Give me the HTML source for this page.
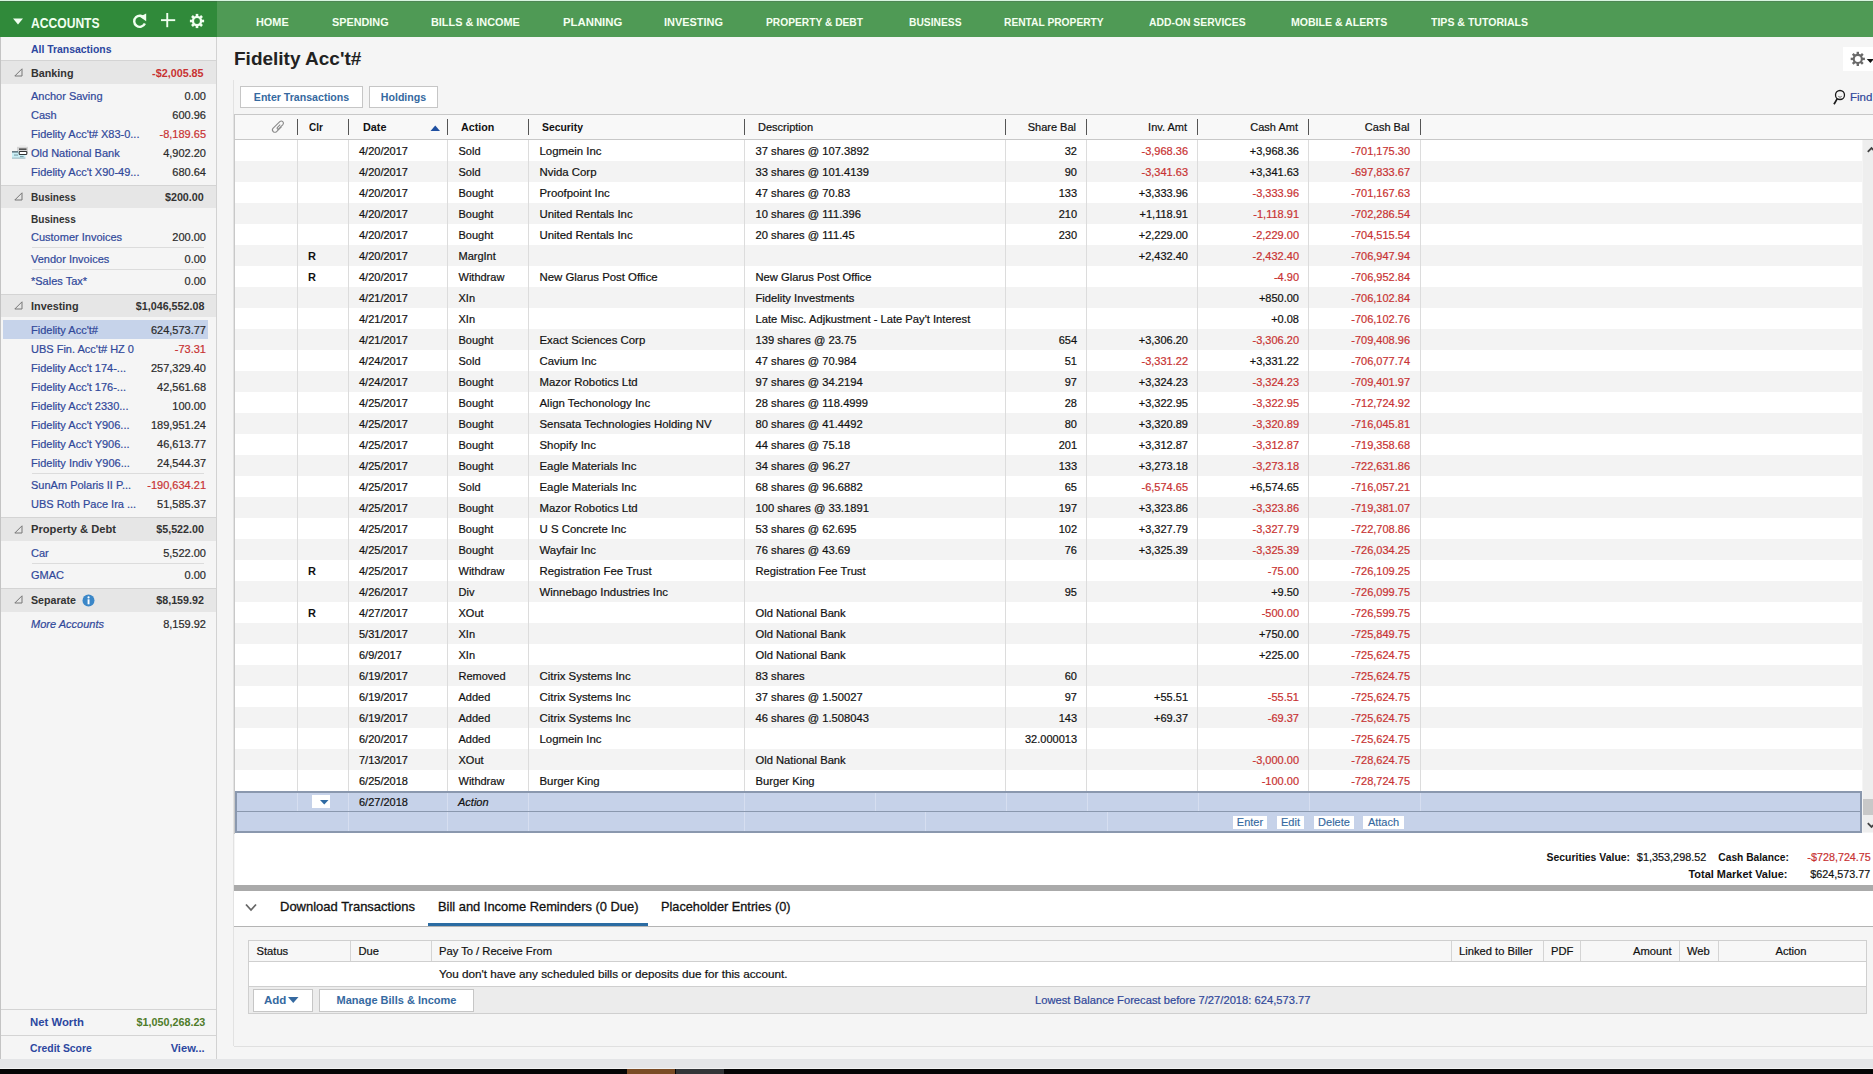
<!DOCTYPE html>
<html><head><meta charset="utf-8"><style>
html,body{margin:0;padding:0;}
body{width:1873px;height:1074px;position:relative;overflow:hidden;font-family:"Liberation Sans", sans-serif;background:#f5f5f5;}
.t{position:absolute;white-space:nowrap;}
.b{position:absolute;}
svg.b{overflow:visible;}
</style></head><body>
<div class="b" style="left:0px;top:0px;width:1873px;height:1074px;background:#f5f5f5;"></div>
<div class="b" style="left:0px;top:0px;width:1873px;height:1px;background:#d8f6e0;"></div>
<div class="b" style="left:0px;top:1px;width:217px;height:1px;background:#3b7542;"></div>
<div class="b" style="left:217px;top:1px;width:1656px;height:1px;background:#4f8755;"></div>
<div class="b" style="left:0px;top:2px;width:217px;height:35px;background:#308a3a;"></div>
<div class="b" style="left:217px;top:2px;width:1656px;height:35px;background:#4f9a55;"></div>
<div class="t" style="left: 256px; top: 12px; height: 20px; line-height: 20px; font-size: 11px; font-weight: 700; color: rgb(244, 255, 240); transform: scaleX(0.9909); transform-origin: 0px 0px;">HOME</div>
<div class="t" style="left: 331.8px; top: 12px; height: 20px; line-height: 20px; font-size: 11px; font-weight: 700; color: rgb(244, 255, 240); transform: scaleX(0.9849); transform-origin: 0px 0px;">SPENDING</div>
<div class="t" style="left: 431px; top: 12px; height: 20px; line-height: 20px; font-size: 11px; font-weight: 700; color: rgb(244, 255, 240); transform: scaleX(0.9884); transform-origin: 0px 0px;">BILLS &amp; INCOME</div>
<div class="t" style="left: 563px; top: 12px; height: 20px; line-height: 20px; font-size: 11px; font-weight: 700; color: rgb(244, 255, 240); transform: scaleX(1.0321); transform-origin: 0px 0px;">PLANNING</div>
<div class="t" style="left: 664px; top: 12px; height: 20px; line-height: 20px; font-size: 11px; font-weight: 700; color: rgb(244, 255, 240); transform: scaleX(0.995); transform-origin: 0px 0px;">INVESTING</div>
<div class="t" style="left: 766px; top: 12px; height: 20px; line-height: 20px; font-size: 11px; font-weight: 700; color: rgb(244, 255, 240); transform: scaleX(0.9299); transform-origin: 0px 0px;">PROPERTY &amp; DEBT</div>
<div class="t" style="left: 908.8px; top: 12px; height: 20px; line-height: 20px; font-size: 11px; font-weight: 700; color: rgb(244, 255, 240); transform: scaleX(0.9333); transform-origin: 0px 0px;">BUSINESS</div>
<div class="t" style="left: 1003.9px; top: 12px; height: 20px; line-height: 20px; font-size: 11px; font-weight: 700; color: rgb(244, 255, 240); transform: scaleX(0.9303); transform-origin: 0px 0px;">RENTAL PROPERTY</div>
<div class="t" style="left: 1149.4px; top: 12px; height: 20px; line-height: 20px; font-size: 11px; font-weight: 700; color: rgb(244, 255, 240); transform: scaleX(0.9426); transform-origin: 0px 0px;">ADD-ON SERVICES</div>
<div class="t" style="left: 1291px; top: 12px; height: 20px; line-height: 20px; font-size: 11px; font-weight: 700; color: rgb(244, 255, 240); transform: scaleX(0.9588); transform-origin: 0px 0px;">MOBILE &amp; ALERTS</div>
<div class="t" style="left: 1431px; top: 12px; height: 20px; line-height: 20px; font-size: 11px; font-weight: 700; color: rgb(244, 255, 240); transform: scaleX(0.958); transform-origin: 0px 0px;">TIPS &amp; TUTORIALS</div>
<svg class="b" style="left:12px;top:18px" width="12" height="7"><path d="M1 0.5 L11 0.5 L6 6.5 Z" fill="#f0fff0"></path></svg>
<div class="t" style="left: 31px; top: 12.5px; height: 20px; line-height: 20px; font-size: 14.2px; font-weight: 700; color: rgb(240, 255, 240); transform: scaleX(0.8532); transform-origin: 0px 0px;">ACCOUNTS</div>
<svg class="b" style="left:129.5px;top:12px" width="18" height="18" viewBox="0 0 18 18"><path d="M14.6 6.4 A5.6 5.6 0 1 0 14.9 11.6" fill="none" stroke="#f0fff0" stroke-width="2.4"></path><path d="M9.8 4.8 L16.2 1.6 L16.2 9.2 Z" fill="#f0fff0"></path></svg>
<svg class="b" style="left:160px;top:12px" width="16" height="16"><rect x="6.3" y="1" width="1.9" height="14.2" fill="#f0fff0"></rect><rect x="1" y="7.2" width="14.2" height="1.9" fill="#f0fff0"></rect></svg>
<svg class="b" style="left:188px;top:12px" width="18" height="18"><circle cx="9" cy="9" r="5.2" fill="#f0fff0"></circle><rect x="7.70" y="1.90" width="2.60" height="3.10" fill="#f0fff0" transform="rotate(0.0 9 9)"></rect><rect x="7.70" y="1.90" width="2.60" height="3.10" fill="#f0fff0" transform="rotate(45.0 9 9)"></rect><rect x="7.70" y="1.90" width="2.60" height="3.10" fill="#f0fff0" transform="rotate(90.0 9 9)"></rect><rect x="7.70" y="1.90" width="2.60" height="3.10" fill="#f0fff0" transform="rotate(135.0 9 9)"></rect><rect x="7.70" y="1.90" width="2.60" height="3.10" fill="#f0fff0" transform="rotate(180.0 9 9)"></rect><rect x="7.70" y="1.90" width="2.60" height="3.10" fill="#f0fff0" transform="rotate(225.0 9 9)"></rect><rect x="7.70" y="1.90" width="2.60" height="3.10" fill="#f0fff0" transform="rotate(270.0 9 9)"></rect><rect x="7.70" y="1.90" width="2.60" height="3.10" fill="#f0fff0" transform="rotate(315.0 9 9)"></rect><circle cx="9" cy="9" r="2.9" fill="#308a3a"></circle></svg>
<div class="b" style="left:0px;top:37px;width:1px;height:1022px;background:#c4c4c4;"></div>
<div class="b" style="left:216px;top:37px;width:1px;height:1022px;background:#d2d2d2;"></div>
<div class="t" style="left: 31px; top: 38.5px; height: 20px; line-height: 20px; font-size: 11px; color: rgb(44, 71, 160); font-weight: 700; transform: scaleX(0.9472); transform-origin: 0px 0px;">All Transactions</div>
<div class="b" style="left:1px;top:60px;width:215px;height:1px;background:#d4d4d4;"></div>
<div class="b" style="left:1px;top:61px;width:215px;height:23px;background:#e6e6e6;"></div>
<svg class="b" style="left:14px;top:68.2px" width="9" height="9"><path d="M8 0.8 L8 8 L0.8 8 Z" fill="none" stroke="#777" stroke-width="1"></path></svg>
<div class="t" style="left: 31px; top: 62.7px; height: 20px; line-height: 20px; font-size: 11px; color: rgb(51, 51, 51); font-weight: 700; transform: scaleX(0.9791); transform-origin: 0px 0px;">Banking</div>
<div class="t" style="right: 1669px; text-align: right; top: 62.7px; height: 20px; line-height: 20px; font-size: 11px; color: rgb(200, 50, 50); font-weight: 700; transform: scaleX(0.9789); transform-origin: 100% 0px;">-$2,005.85</div>
<div class="t" style="left:31px;top:86.0px;height:20px;line-height:20px;font-size:11px;color:#30489a;-webkit-text-stroke:0.2px #30489a;">Anchor Saving</div>
<div class="t" style="right:1667px;text-align:right;top:86.0px;height:20px;line-height:20px;font-size:11px;color:#2a2a2a;-webkit-text-stroke:0.2px #2a2a2a;">0.00</div>
<div class="t" style="left:31px;top:105.0px;height:20px;line-height:20px;font-size:11px;color:#30489a;-webkit-text-stroke:0.2px #30489a;">Cash</div>
<div class="t" style="right:1667px;text-align:right;top:105.0px;height:20px;line-height:20px;font-size:11px;color:#2a2a2a;-webkit-text-stroke:0.2px #2a2a2a;">600.96</div>
<div class="t" style="left:31px;top:124.0px;height:20px;line-height:20px;font-size:11px;color:#30489a;-webkit-text-stroke:0.2px #30489a;">Fidelity Acc't# X83-0...</div>
<div class="t" style="right:1667px;text-align:right;top:124.0px;height:20px;line-height:20px;font-size:11px;color:#c83232;-webkit-text-stroke:0.2px #c83232;">-8,189.65</div>
<div class="t" style="left:31px;top:143.0px;height:20px;line-height:20px;font-size:11px;color:#30489a;-webkit-text-stroke:0.2px #30489a;">Old National Bank</div>
<div class="t" style="right:1667px;text-align:right;top:143.0px;height:20px;line-height:20px;font-size:11px;color:#2a2a2a;-webkit-text-stroke:0.2px #2a2a2a;">4,902.20</div>
<div class="t" style="left:31px;top:162.0px;height:20px;line-height:20px;font-size:11px;color:#30489a;-webkit-text-stroke:0.2px #30489a;">Fidelity Acc't X90-49...</div>
<div class="t" style="right:1667px;text-align:right;top:162.0px;height:20px;line-height:20px;font-size:11px;color:#2a2a2a;-webkit-text-stroke:0.2px #2a2a2a;">680.64</div>
<svg class="b" style="left:11px;top:145px" width="18" height="16"><rect x="6" y="1.8" width="11" height="6.5" fill="#d4d4d4"></rect><rect x="8.5" y="0.2" width="6.5" height="1.8" fill="#ececec"></rect><rect x="8" y="3.5" width="7.5" height="1.3" fill="#333"></rect><rect x="1" y="6.2" width="13.4" height="7.4" fill="#c9eef5"></rect><rect x="1" y="12.6" width="13.4" height="1" fill="#9fb4bb"></rect><rect x="1" y="6.2" width="6" height="1.3" fill="#4d5f6a"></rect><rect x="8.2" y="6.5" width="7.6" height="3" rx="0.8" fill="#fff" stroke="#333" stroke-width="1.1"></rect><rect x="3" y="9.6" width="4" height="0.9" fill="#6a8a95"></rect><rect x="9" y="11.2" width="3.6" height="0.9" fill="#6a8a95"></rect></svg>
<div class="b" style="left:1px;top:185px;width:215px;height:1px;background:#d4d4d4;"></div>
<div class="b" style="left:1px;top:186px;width:215px;height:22px;background:#e6e6e6;"></div>
<svg class="b" style="left:14px;top:192.1px" width="9" height="9"><path d="M8 0.8 L8 8 L0.8 8 Z" fill="none" stroke="#777" stroke-width="1"></path></svg>
<div class="t" style="left: 31px; top: 186.6px; height: 20px; line-height: 20px; font-size: 11px; color: rgb(51, 51, 51); font-weight: 700; transform: scaleX(0.9157); transform-origin: 0px 0px;">Business</div>
<div class="t" style="right: 1669px; text-align: right; top: 186.6px; height: 20px; line-height: 20px; font-size: 11px; color: rgb(51, 51, 51); font-weight: 700; transform: scaleX(0.9757); transform-origin: 100% 0px;">$200.00</div>
<div class="t" style="left: 31px; top: 209px; height: 20px; line-height: 20px; font-size: 11px; color: rgb(51, 51, 51); font-weight: 700; transform: scaleX(0.9157); transform-origin: 0px 0px;">Business</div>
<div class="t" style="left:31px;top:227.0px;height:20px;line-height:20px;font-size:11px;color:#30489a;-webkit-text-stroke:0.2px #30489a;">Customer Invoices</div>
<div class="t" style="right:1667px;text-align:right;top:227.0px;height:20px;line-height:20px;font-size:11px;color:#2a2a2a;-webkit-text-stroke:0.2px #2a2a2a;">200.00</div>
<div class="b" style="left:32px;top:247px;width:172px;height:1px;background:#dcdcdc;"></div>
<div class="t" style="left:31px;top:249.0px;height:20px;line-height:20px;font-size:11px;color:#30489a;-webkit-text-stroke:0.2px #30489a;">Vendor Invoices</div>
<div class="t" style="right:1667px;text-align:right;top:249.0px;height:20px;line-height:20px;font-size:11px;color:#2a2a2a;-webkit-text-stroke:0.2px #2a2a2a;">0.00</div>
<div class="b" style="left:32px;top:269px;width:172px;height:1px;background:#dcdcdc;"></div>
<div class="t" style="left:31px;top:271.0px;height:20px;line-height:20px;font-size:11px;color:#30489a;-webkit-text-stroke:0.2px #30489a;">*Sales Tax*</div>
<div class="t" style="right:1667px;text-align:right;top:271.0px;height:20px;line-height:20px;font-size:11px;color:#2a2a2a;-webkit-text-stroke:0.2px #2a2a2a;">0.00</div>
<div class="b" style="left:1px;top:294px;width:215px;height:1px;background:#d4d4d4;"></div>
<div class="b" style="left:1px;top:295px;width:215px;height:22px;background:#e6e6e6;"></div>
<svg class="b" style="left:14px;top:301.3px" width="9" height="9"><path d="M8 0.8 L8 8 L0.8 8 Z" fill="none" stroke="#777" stroke-width="1"></path></svg>
<div class="t" style="left: 31px; top: 295.8px; height: 20px; line-height: 20px; font-size: 11px; color: rgb(51, 51, 51); font-weight: 700; transform: scaleX(0.9856); transform-origin: 0px 0px;">Investing</div>
<div class="t" style="right: 1669px; text-align: right; top: 295.8px; height: 20px; line-height: 20px; font-size: 11px; color: rgb(51, 51, 51); font-weight: 700; transform: scaleX(0.9736); transform-origin: 100% 0px;">$1,046,552.08</div>
<div class="b" style="left:3px;top:320px;width:205px;height:19px;background:#c6d3ea;"></div>
<div class="t" style="left:31px;top:319.5px;height:20px;line-height:20px;font-size:11px;color:#30489a;-webkit-text-stroke:0.2px #30489a;">Fidelity Acc't#</div>
<div class="t" style="right:1667px;text-align:right;top:319.5px;height:20px;line-height:20px;font-size:11px;color:#2a2a2a;-webkit-text-stroke:0.2px #2a2a2a;">624,573.77</div>
<div class="t" style="left:31px;top:338.5px;height:20px;line-height:20px;font-size:11px;color:#30489a;-webkit-text-stroke:0.2px #30489a;">UBS Fin. Acc't# HZ 0</div>
<div class="t" style="right:1667px;text-align:right;top:338.5px;height:20px;line-height:20px;font-size:11px;color:#c83232;-webkit-text-stroke:0.2px #c83232;">-73.31</div>
<div class="t" style="left:31px;top:357.5px;height:20px;line-height:20px;font-size:11px;color:#30489a;-webkit-text-stroke:0.2px #30489a;">Fidelity Acc't 174-...</div>
<div class="t" style="right:1667px;text-align:right;top:357.5px;height:20px;line-height:20px;font-size:11px;color:#2a2a2a;-webkit-text-stroke:0.2px #2a2a2a;">257,329.40</div>
<div class="t" style="left:31px;top:376.5px;height:20px;line-height:20px;font-size:11px;color:#30489a;-webkit-text-stroke:0.2px #30489a;">Fidelity Acc't 176-...</div>
<div class="t" style="right:1667px;text-align:right;top:376.5px;height:20px;line-height:20px;font-size:11px;color:#2a2a2a;-webkit-text-stroke:0.2px #2a2a2a;">42,561.68</div>
<div class="t" style="left:31px;top:395.5px;height:20px;line-height:20px;font-size:11px;color:#30489a;-webkit-text-stroke:0.2px #30489a;">Fidelity Acc't 2330...</div>
<div class="t" style="right:1667px;text-align:right;top:395.5px;height:20px;line-height:20px;font-size:11px;color:#2a2a2a;-webkit-text-stroke:0.2px #2a2a2a;">100.00</div>
<div class="t" style="left:31px;top:414.5px;height:20px;line-height:20px;font-size:11px;color:#30489a;-webkit-text-stroke:0.2px #30489a;">Fidelity Acc't Y906...</div>
<div class="t" style="right:1667px;text-align:right;top:414.5px;height:20px;line-height:20px;font-size:11px;color:#2a2a2a;-webkit-text-stroke:0.2px #2a2a2a;">189,951.24</div>
<div class="t" style="left:31px;top:433.5px;height:20px;line-height:20px;font-size:11px;color:#30489a;-webkit-text-stroke:0.2px #30489a;">Fidelity Acc't Y906...</div>
<div class="t" style="right:1667px;text-align:right;top:433.5px;height:20px;line-height:20px;font-size:11px;color:#2a2a2a;-webkit-text-stroke:0.2px #2a2a2a;">46,613.77</div>
<div class="t" style="left:31px;top:452.5px;height:20px;line-height:20px;font-size:11px;color:#30489a;-webkit-text-stroke:0.2px #30489a;">Fidelity Indiv Y906...</div>
<div class="t" style="right:1667px;text-align:right;top:452.5px;height:20px;line-height:20px;font-size:11px;color:#2a2a2a;-webkit-text-stroke:0.2px #2a2a2a;">24,544.37</div>
<div class="b" style="left:32px;top:473px;width:172px;height:1px;background:#dcdcdc;"></div>
<div class="t" style="left:31px;top:475.0px;height:20px;line-height:20px;font-size:11px;color:#30489a;-webkit-text-stroke:0.2px #30489a;">SunAm Polaris II P...</div>
<div class="t" style="right:1667px;text-align:right;top:475.0px;height:20px;line-height:20px;font-size:11px;color:#c83232;-webkit-text-stroke:0.2px #c83232;">-190,634.21</div>
<div class="t" style="left:31px;top:494.0px;height:20px;line-height:20px;font-size:11px;color:#30489a;-webkit-text-stroke:0.2px #30489a;">UBS Roth Pace Ira ...</div>
<div class="t" style="right:1667px;text-align:right;top:494.0px;height:20px;line-height:20px;font-size:11px;color:#2a2a2a;-webkit-text-stroke:0.2px #2a2a2a;">51,585.37</div>
<div class="b" style="left:1px;top:517px;width:215px;height:1px;background:#d4d4d4;"></div>
<div class="b" style="left:1px;top:518px;width:215px;height:23px;background:#e6e6e6;"></div>
<svg class="b" style="left:14px;top:524.6px" width="9" height="9"><path d="M8 0.8 L8 8 L0.8 8 Z" fill="none" stroke="#777" stroke-width="1"></path></svg>
<div class="t" style="left: 31px; top: 519.1px; height: 20px; line-height: 20px; font-size: 11px; color: rgb(51, 51, 51); font-weight: 700; transform: scaleX(1.0149); transform-origin: 0px 0px;">Property &amp; Debt</div>
<div class="t" style="right: 1669px; text-align: right; top: 519.1px; height: 20px; line-height: 20px; font-size: 11px; color: rgb(51, 51, 51); font-weight: 700; transform: scaleX(0.9747); transform-origin: 100% 0px;">$5,522.00</div>
<div class="t" style="left:31px;top:543.0px;height:20px;line-height:20px;font-size:11px;color:#30489a;-webkit-text-stroke:0.2px #30489a;">Car</div>
<div class="t" style="right:1667px;text-align:right;top:543.0px;height:20px;line-height:20px;font-size:11px;color:#2a2a2a;-webkit-text-stroke:0.2px #2a2a2a;">5,522.00</div>
<div class="b" style="left:32px;top:563px;width:172px;height:1px;background:#dcdcdc;"></div>
<div class="t" style="left:31px;top:565.0px;height:20px;line-height:20px;font-size:11px;color:#30489a;-webkit-text-stroke:0.2px #30489a;">GMAC</div>
<div class="t" style="right:1667px;text-align:right;top:565.0px;height:20px;line-height:20px;font-size:11px;color:#2a2a2a;-webkit-text-stroke:0.2px #2a2a2a;">0.00</div>
<div class="b" style="left:1px;top:588px;width:215px;height:1px;background:#d4d4d4;"></div>
<div class="b" style="left:1px;top:589px;width:215px;height:23px;background:#e6e6e6;"></div>
<svg class="b" style="left:14px;top:595.1px" width="9" height="9"><path d="M8 0.8 L8 8 L0.8 8 Z" fill="none" stroke="#777" stroke-width="1"></path></svg>
<div class="t" style="left: 31px; top: 589.6px; height: 20px; line-height: 20px; font-size: 11px; color: rgb(51, 51, 51); font-weight: 700; transform: scaleX(0.9681); transform-origin: 0px 0px;">Separate</div>
<div class="t" style="right: 1669px; text-align: right; top: 589.6px; height: 20px; line-height: 20px; font-size: 11px; color: rgb(51, 51, 51); font-weight: 700; transform: scaleX(0.9747); transform-origin: 100% 0px;">$8,159.92</div>
<svg class="b" style="left:82px;top:593.6px" width="13" height="13"><circle cx="6.5" cy="6.5" r="6" fill="#3b87c8"></circle><rect x="5.6" y="5.3" width="1.9" height="5" fill="#fff"></rect><circle cx="6.55" cy="3.4" r="1.1" fill="#fff"></circle></svg>
<div class="t" style="left:31px;top:614.0px;height:20px;line-height:20px;font-size:11px;color:#30489a;font-style:italic;-webkit-text-stroke:0.2px #30489a;">More Accounts</div>
<div class="t" style="right:1667px;text-align:right;top:614.0px;height:20px;line-height:20px;font-size:11px;color:#2a2a2a;-webkit-text-stroke:0.2px #2a2a2a;">8,159.92</div>
<div class="b" style="left:1px;top:1009px;width:215px;height:1px;background:#d4d4d4;"></div>
<div class="t" style="left: 30px; top: 1012px; height: 20px; line-height: 20px; font-size: 11px; color: rgb(44, 71, 160); font-weight: 700; transform: scaleX(1.0313); transform-origin: 0px 0px;">Net Worth</div>
<div class="t" style="right: 1668px; text-align: right; top: 1012px; height: 20px; line-height: 20px; font-size: 11px; color: rgb(79, 124, 42); font-weight: 700; transform: scaleX(0.9778); transform-origin: 100% 0px;">$1,050,268.23</div>
<div class="b" style="left:1px;top:1035px;width:215px;height:1px;background:#d4d4d4;"></div>
<div class="t" style="left: 30px; top: 1038px; height: 20px; line-height: 20px; font-size: 11px; color: rgb(44, 71, 160); font-weight: 700; transform: scaleX(0.9446); transform-origin: 0px 0px;">Credit Score</div>
<div class="t" style="right: 1668px; text-align: right; top: 1038px; height: 20px; line-height: 20px; font-size: 11px; color: rgb(44, 71, 160); font-weight: 700; transform: scaleX(1.0107); transform-origin: 100% 0px;">View...</div>
<div class="t" style="left:234px;top:47px;height:24px;line-height:24px;font-size:19px;font-weight:700;color:#222;">Fidelity Acc't#</div>
<div class="b" style="left:233px;top:80px;width:1px;height:966px;background:#e2e2e2;"></div>
<div class="b" style="left:1843px;top:47px;width:30px;height:24px;background:#ffffff;"></div>
<svg class="b" style="left:1849px;top:50px" width="26" height="18"><circle cx="8.8" cy="8.9" r="5.1" fill="#6a6a6a"></circle><rect x="7.60" y="1.80" width="2.40" height="3.20" fill="#6a6a6a" transform="rotate(0.0 8.8 8.9)"></rect><rect x="7.60" y="1.80" width="2.40" height="3.20" fill="#6a6a6a" transform="rotate(45.0 8.8 8.9)"></rect><rect x="7.60" y="1.80" width="2.40" height="3.20" fill="#6a6a6a" transform="rotate(90.0 8.8 8.9)"></rect><rect x="7.60" y="1.80" width="2.40" height="3.20" fill="#6a6a6a" transform="rotate(135.0 8.8 8.9)"></rect><rect x="7.60" y="1.80" width="2.40" height="3.20" fill="#6a6a6a" transform="rotate(180.0 8.8 8.9)"></rect><rect x="7.60" y="1.80" width="2.40" height="3.20" fill="#6a6a6a" transform="rotate(225.0 8.8 8.9)"></rect><rect x="7.60" y="1.80" width="2.40" height="3.20" fill="#6a6a6a" transform="rotate(270.0 8.8 8.9)"></rect><rect x="7.60" y="1.80" width="2.40" height="3.20" fill="#6a6a6a" transform="rotate(315.0 8.8 8.9)"></rect><circle cx="8.8" cy="8.9" r="3.0" fill="#fff"></circle><path d="M17.8 9 L25 9 L21.4 13 Z" fill="#111"></path></svg>
<svg class="b" style="left:1832px;top:88px" width="14" height="18"><circle cx="8" cy="7" r="4.5" fill="none" stroke="#1a1a1a" stroke-width="1.3"></circle><path d="M6.3 8.3 A2.2 2.2 0 0 0 9.7 8.3" fill="none" stroke="#444" stroke-width="0.8"></path><path d="M5.3 10.6 L2 16.2" stroke="#1a1a1a" stroke-width="1.7"></path></svg>
<div class="t" style="left:1850px;top:87.0px;height:20px;line-height:20px;font-size:11.5px;color:#30489a;-webkit-text-stroke:0.2px #30489a;">Find</div>
<div class="b" style="left:240px;top:86px;width:123px;height:22px;background:#fff;box-sizing:border-box;border:1px solid #c6c6c6;"></div>
<div class="t" style="left:240px;top:87.0px;width:123px;height:20px;line-height:20px;font-size:10.6px;font-weight:700;color:#3569a0;text-align:center;">Enter Transactions</div>
<div class="b" style="left:369px;top:86px;width:69px;height:22px;background:#fff;box-sizing:border-box;border:1px solid #c6c6c6;"></div>
<div class="t" style="left:369px;top:87.0px;width:69px;height:20px;line-height:20px;font-size:10.6px;font-weight:700;color:#3569a0;text-align:center;">Holdings</div>
<div class="b" style="left:234px;top:114px;width:1639px;height:1px;background:#c8c8c8;"></div>
<div class="b" style="left:234px;top:114px;width:1px;height:720px;background:#c8c8c8;"></div>
<div class="b" style="left:235px;top:115px;width:1638px;height:24px;background:#f8f8f8;"></div>
<div class="b" style="left:235px;top:139px;width:1638px;height:1px;background:#c8c8c8;"></div>
<div class="b" style="left:235px;top:140px;width:1627px;height:745px;background:#ffffff;"></div>
<div class="b" style="left:297px;top:119px;width:1px;height:16px;background:#555;"></div>
<div class="b" style="left:348px;top:119px;width:1px;height:16px;background:#555;"></div>
<div class="b" style="left:447px;top:119px;width:1px;height:16px;background:#555;"></div>
<div class="b" style="left:528px;top:119px;width:1px;height:16px;background:#555;"></div>
<div class="b" style="left:744px;top:119px;width:1px;height:16px;background:#555;"></div>
<div class="b" style="left:1005px;top:119px;width:1px;height:16px;background:#555;"></div>
<div class="b" style="left:1086px;top:119px;width:1px;height:16px;background:#555;"></div>
<div class="b" style="left:1197px;top:119px;width:1px;height:16px;background:#555;"></div>
<div class="b" style="left:1308px;top:119px;width:1px;height:16px;background:#555;"></div>
<div class="b" style="left:1420px;top:119px;width:1px;height:16px;background:#555;"></div>
<svg class="b" style="left:270px;top:119px" width="16" height="16"><path d="M11.6 7.6 L6.6 12.6 A2.4 2.4 0 0 1 3.2 9.2 L9.8 2.6 A2.2 2.2 0 0 1 12.9 5.7 L8.7 9.9 A1 1 0 0 1 7.3 8.5 L10.2 5.6" fill="none" stroke="#8a8a8a" stroke-width="1.1"></path></svg>
<div class="t" style="left: 308.5px; top: 117px; height: 20px; line-height: 20px; font-size: 11px; color: rgb(17, 17, 17); font-weight: 700; transform: scaleX(0.9031); transform-origin: 0px 0px;">Clr</div>
<div class="t" style="left: 362.5px; top: 117px; height: 20px; line-height: 20px; font-size: 11px; color: rgb(17, 17, 17); font-weight: 700; transform: scaleX(0.9856); transform-origin: 0px 0px;">Date</div>
<svg class="b" style="left:430px;top:125px" width="11" height="7"><path d="M0.5 6 L5.25 0.5 L10 6 Z" fill="#1f4fa0"></path></svg>
<div class="t" style="left: 461px; top: 117px; height: 20px; line-height: 20px; font-size: 11px; color: rgb(17, 17, 17); font-weight: 700; transform: scaleX(0.9698); transform-origin: 0px 0px;">Action</div>
<div class="t" style="left: 542px; top: 117px; height: 20px; line-height: 20px; font-size: 11px; color: rgb(17, 17, 17); font-weight: 700; transform: scaleX(0.9442); transform-origin: 0px 0px;">Security</div>
<div class="t" style="left:758px;top:117.0px;height:20px;line-height:20px;font-size:11px;color:#111;-webkit-text-stroke:0.2px #111;">Description</div>
<div class="t" style="right:797px;text-align:right;top:117.0px;height:20px;line-height:20px;font-size:11px;color:#111;-webkit-text-stroke:0.2px #111;">Share Bal</div>
<div class="t" style="right:686px;text-align:right;top:117.0px;height:20px;line-height:20px;font-size:11px;color:#111;-webkit-text-stroke:0.2px #111;">Inv. Amt</div>
<div class="t" style="right:575px;text-align:right;top:117.0px;height:20px;line-height:20px;font-size:11px;color:#111;-webkit-text-stroke:0.2px #111;">Cash Amt</div>
<div class="t" style="right:463.5px;text-align:right;top:117.0px;height:20px;line-height:20px;font-size:11px;color:#111;-webkit-text-stroke:0.2px #111;">Cash Bal</div>
<div class="b" style="left:235px;top:161px;width:1627px;height:21px;background:#f3f3f3;"></div>
<div class="b" style="left:235px;top:203px;width:1627px;height:21px;background:#f3f3f3;"></div>
<div class="b" style="left:235px;top:245px;width:1627px;height:21px;background:#f3f3f3;"></div>
<div class="b" style="left:235px;top:287px;width:1627px;height:21px;background:#f3f3f3;"></div>
<div class="b" style="left:235px;top:329px;width:1627px;height:21px;background:#f3f3f3;"></div>
<div class="b" style="left:235px;top:371px;width:1627px;height:21px;background:#f3f3f3;"></div>
<div class="b" style="left:235px;top:413px;width:1627px;height:21px;background:#f3f3f3;"></div>
<div class="b" style="left:235px;top:455px;width:1627px;height:21px;background:#f3f3f3;"></div>
<div class="b" style="left:235px;top:497px;width:1627px;height:21px;background:#f3f3f3;"></div>
<div class="b" style="left:235px;top:539px;width:1627px;height:21px;background:#f3f3f3;"></div>
<div class="b" style="left:235px;top:581px;width:1627px;height:21px;background:#f3f3f3;"></div>
<div class="b" style="left:235px;top:623px;width:1627px;height:21px;background:#f3f3f3;"></div>
<div class="b" style="left:235px;top:665px;width:1627px;height:21px;background:#f3f3f3;"></div>
<div class="b" style="left:235px;top:707px;width:1627px;height:21px;background:#f3f3f3;"></div>
<div class="b" style="left:235px;top:749px;width:1627px;height:21px;background:#f3f3f3;"></div>
<div class="b" style="left:297px;top:140px;width:1px;height:651px;background:#dcdcdc;"></div>
<div class="b" style="left:348px;top:140px;width:1px;height:651px;background:#dcdcdc;"></div>
<div class="b" style="left:447px;top:140px;width:1px;height:651px;background:#dcdcdc;"></div>
<div class="b" style="left:528px;top:140px;width:1px;height:651px;background:#dcdcdc;"></div>
<div class="b" style="left:744px;top:140px;width:1px;height:651px;background:#dcdcdc;"></div>
<div class="b" style="left:1005px;top:140px;width:1px;height:651px;background:#dcdcdc;"></div>
<div class="b" style="left:1086px;top:140px;width:1px;height:651px;background:#dcdcdc;"></div>
<div class="b" style="left:1197px;top:140px;width:1px;height:651px;background:#dcdcdc;"></div>
<div class="b" style="left:1308px;top:140px;width:1px;height:651px;background:#dcdcdc;"></div>
<div class="b" style="left:1420px;top:140px;width:1px;height:651px;background:#dcdcdc;"></div>
<div class="t" style="left:359px;top:141.0px;height:20px;line-height:20px;font-size:11px;color:#111;-webkit-text-stroke:0.2px #111;">4/20/2017</div>
<div class="t" style="left:458.5px;top:141.0px;height:20px;line-height:20px;font-size:11px;color:#111;-webkit-text-stroke:0.2px #111;">Sold</div>
<div class="t" style="left:539.5px;top:141.0px;height:20px;line-height:20px;font-size:11.4px;color:#111;-webkit-text-stroke:0.2px #111;">Logmein Inc</div>
<div class="t" style="left:755.5px;top:141.0px;height:20px;line-height:20px;font-size:11.2px;color:#111;-webkit-text-stroke:0.2px #111;">37 shares @ 107.3892</div>
<div class="t" style="right:796px;text-align:right;top:141.0px;height:20px;line-height:20px;font-size:11px;color:#111;-webkit-text-stroke:0.2px #111;">32</div>
<div class="t" style="right:685px;text-align:right;top:141.0px;height:20px;line-height:20px;font-size:11px;color:#c83232;-webkit-text-stroke:0.2px #c83232;">-3,968.36</div>
<div class="t" style="right:574px;text-align:right;top:141.0px;height:20px;line-height:20px;font-size:11px;color:#111;-webkit-text-stroke:0.2px #111;">+3,968.36</div>
<div class="t" style="right:463px;text-align:right;top:141.0px;height:20px;line-height:20px;font-size:11px;color:#c83232;-webkit-text-stroke:0.2px #c83232;">-701,175.30</div>
<div class="t" style="left:359px;top:162.0px;height:20px;line-height:20px;font-size:11px;color:#111;-webkit-text-stroke:0.2px #111;">4/20/2017</div>
<div class="t" style="left:458.5px;top:162.0px;height:20px;line-height:20px;font-size:11px;color:#111;-webkit-text-stroke:0.2px #111;">Sold</div>
<div class="t" style="left:539.5px;top:162.0px;height:20px;line-height:20px;font-size:11.4px;color:#111;-webkit-text-stroke:0.2px #111;">Nvida Corp</div>
<div class="t" style="left:755.5px;top:162.0px;height:20px;line-height:20px;font-size:11.2px;color:#111;-webkit-text-stroke:0.2px #111;">33 shares @ 101.4139</div>
<div class="t" style="right:796px;text-align:right;top:162.0px;height:20px;line-height:20px;font-size:11px;color:#111;-webkit-text-stroke:0.2px #111;">90</div>
<div class="t" style="right:685px;text-align:right;top:162.0px;height:20px;line-height:20px;font-size:11px;color:#c83232;-webkit-text-stroke:0.2px #c83232;">-3,341.63</div>
<div class="t" style="right:574px;text-align:right;top:162.0px;height:20px;line-height:20px;font-size:11px;color:#111;-webkit-text-stroke:0.2px #111;">+3,341.63</div>
<div class="t" style="right:463px;text-align:right;top:162.0px;height:20px;line-height:20px;font-size:11px;color:#c83232;-webkit-text-stroke:0.2px #c83232;">-697,833.67</div>
<div class="t" style="left:359px;top:183.0px;height:20px;line-height:20px;font-size:11px;color:#111;-webkit-text-stroke:0.2px #111;">4/20/2017</div>
<div class="t" style="left:458.5px;top:183.0px;height:20px;line-height:20px;font-size:11px;color:#111;-webkit-text-stroke:0.2px #111;">Bought</div>
<div class="t" style="left:539.5px;top:183.0px;height:20px;line-height:20px;font-size:11.4px;color:#111;-webkit-text-stroke:0.2px #111;">Proofpoint Inc</div>
<div class="t" style="left:755.5px;top:183.0px;height:20px;line-height:20px;font-size:11.2px;color:#111;-webkit-text-stroke:0.2px #111;">47 shares @ 70.83</div>
<div class="t" style="right:796px;text-align:right;top:183.0px;height:20px;line-height:20px;font-size:11px;color:#111;-webkit-text-stroke:0.2px #111;">133</div>
<div class="t" style="right:685px;text-align:right;top:183.0px;height:20px;line-height:20px;font-size:11px;color:#111;-webkit-text-stroke:0.2px #111;">+3,333.96</div>
<div class="t" style="right:574px;text-align:right;top:183.0px;height:20px;line-height:20px;font-size:11px;color:#c83232;-webkit-text-stroke:0.2px #c83232;">-3,333.96</div>
<div class="t" style="right:463px;text-align:right;top:183.0px;height:20px;line-height:20px;font-size:11px;color:#c83232;-webkit-text-stroke:0.2px #c83232;">-701,167.63</div>
<div class="t" style="left:359px;top:204.0px;height:20px;line-height:20px;font-size:11px;color:#111;-webkit-text-stroke:0.2px #111;">4/20/2017</div>
<div class="t" style="left:458.5px;top:204.0px;height:20px;line-height:20px;font-size:11px;color:#111;-webkit-text-stroke:0.2px #111;">Bought</div>
<div class="t" style="left:539.5px;top:204.0px;height:20px;line-height:20px;font-size:11.4px;color:#111;-webkit-text-stroke:0.2px #111;">United Rentals Inc</div>
<div class="t" style="left:755.5px;top:204.0px;height:20px;line-height:20px;font-size:11.2px;color:#111;-webkit-text-stroke:0.2px #111;">10 shares @ 111.396</div>
<div class="t" style="right:796px;text-align:right;top:204.0px;height:20px;line-height:20px;font-size:11px;color:#111;-webkit-text-stroke:0.2px #111;">210</div>
<div class="t" style="right:685px;text-align:right;top:204.0px;height:20px;line-height:20px;font-size:11px;color:#111;-webkit-text-stroke:0.2px #111;">+1,118.91</div>
<div class="t" style="right:574px;text-align:right;top:204.0px;height:20px;line-height:20px;font-size:11px;color:#c83232;-webkit-text-stroke:0.2px #c83232;">-1,118.91</div>
<div class="t" style="right:463px;text-align:right;top:204.0px;height:20px;line-height:20px;font-size:11px;color:#c83232;-webkit-text-stroke:0.2px #c83232;">-702,286.54</div>
<div class="t" style="left:359px;top:225.0px;height:20px;line-height:20px;font-size:11px;color:#111;-webkit-text-stroke:0.2px #111;">4/20/2017</div>
<div class="t" style="left:458.5px;top:225.0px;height:20px;line-height:20px;font-size:11px;color:#111;-webkit-text-stroke:0.2px #111;">Bought</div>
<div class="t" style="left:539.5px;top:225.0px;height:20px;line-height:20px;font-size:11.4px;color:#111;-webkit-text-stroke:0.2px #111;">United Rentals Inc</div>
<div class="t" style="left:755.5px;top:225.0px;height:20px;line-height:20px;font-size:11.2px;color:#111;-webkit-text-stroke:0.2px #111;">20 shares @ 111.45</div>
<div class="t" style="right:796px;text-align:right;top:225.0px;height:20px;line-height:20px;font-size:11px;color:#111;-webkit-text-stroke:0.2px #111;">230</div>
<div class="t" style="right:685px;text-align:right;top:225.0px;height:20px;line-height:20px;font-size:11px;color:#111;-webkit-text-stroke:0.2px #111;">+2,229.00</div>
<div class="t" style="right:574px;text-align:right;top:225.0px;height:20px;line-height:20px;font-size:11px;color:#c83232;-webkit-text-stroke:0.2px #c83232;">-2,229.00</div>
<div class="t" style="right:463px;text-align:right;top:225.0px;height:20px;line-height:20px;font-size:11px;color:#c83232;-webkit-text-stroke:0.2px #c83232;">-704,515.54</div>
<div class="t" style="left:308px;top:246.0px;height:20px;line-height:20px;font-size:11px;color:#111;font-weight:700;">R</div>
<div class="t" style="left:359px;top:246.0px;height:20px;line-height:20px;font-size:11px;color:#111;-webkit-text-stroke:0.2px #111;">4/20/2017</div>
<div class="t" style="left:458.5px;top:246.0px;height:20px;line-height:20px;font-size:11px;color:#111;-webkit-text-stroke:0.2px #111;">MargInt</div>
<div class="t" style="right:685px;text-align:right;top:246.0px;height:20px;line-height:20px;font-size:11px;color:#111;-webkit-text-stroke:0.2px #111;">+2,432.40</div>
<div class="t" style="right:574px;text-align:right;top:246.0px;height:20px;line-height:20px;font-size:11px;color:#c83232;-webkit-text-stroke:0.2px #c83232;">-2,432.40</div>
<div class="t" style="right:463px;text-align:right;top:246.0px;height:20px;line-height:20px;font-size:11px;color:#c83232;-webkit-text-stroke:0.2px #c83232;">-706,947.94</div>
<div class="t" style="left:308px;top:267.0px;height:20px;line-height:20px;font-size:11px;color:#111;font-weight:700;">R</div>
<div class="t" style="left:359px;top:267.0px;height:20px;line-height:20px;font-size:11px;color:#111;-webkit-text-stroke:0.2px #111;">4/20/2017</div>
<div class="t" style="left:458.5px;top:267.0px;height:20px;line-height:20px;font-size:11px;color:#111;-webkit-text-stroke:0.2px #111;">Withdraw</div>
<div class="t" style="left:539.5px;top:267.0px;height:20px;line-height:20px;font-size:11.4px;color:#111;-webkit-text-stroke:0.2px #111;">New Glarus Post Office</div>
<div class="t" style="left:755.5px;top:267.0px;height:20px;line-height:20px;font-size:11.2px;color:#111;-webkit-text-stroke:0.2px #111;">New Glarus Post Office</div>
<div class="t" style="right:574px;text-align:right;top:267.0px;height:20px;line-height:20px;font-size:11px;color:#c83232;-webkit-text-stroke:0.2px #c83232;">-4.90</div>
<div class="t" style="right:463px;text-align:right;top:267.0px;height:20px;line-height:20px;font-size:11px;color:#c83232;-webkit-text-stroke:0.2px #c83232;">-706,952.84</div>
<div class="t" style="left:359px;top:288.0px;height:20px;line-height:20px;font-size:11px;color:#111;-webkit-text-stroke:0.2px #111;">4/21/2017</div>
<div class="t" style="left:458.5px;top:288.0px;height:20px;line-height:20px;font-size:11px;color:#111;-webkit-text-stroke:0.2px #111;">XIn</div>
<div class="t" style="left:755.5px;top:288.0px;height:20px;line-height:20px;font-size:11.2px;color:#111;-webkit-text-stroke:0.2px #111;">Fidelity Investments</div>
<div class="t" style="right:574px;text-align:right;top:288.0px;height:20px;line-height:20px;font-size:11px;color:#111;-webkit-text-stroke:0.2px #111;">+850.00</div>
<div class="t" style="right:463px;text-align:right;top:288.0px;height:20px;line-height:20px;font-size:11px;color:#c83232;-webkit-text-stroke:0.2px #c83232;">-706,102.84</div>
<div class="t" style="left:359px;top:309.0px;height:20px;line-height:20px;font-size:11px;color:#111;-webkit-text-stroke:0.2px #111;">4/21/2017</div>
<div class="t" style="left:458.5px;top:309.0px;height:20px;line-height:20px;font-size:11px;color:#111;-webkit-text-stroke:0.2px #111;">XIn</div>
<div class="t" style="left:755.5px;top:309.0px;height:20px;line-height:20px;font-size:11.2px;color:#111;-webkit-text-stroke:0.2px #111;">Late Misc. Adjkustment - Late Pay't Interest</div>
<div class="t" style="right:574px;text-align:right;top:309.0px;height:20px;line-height:20px;font-size:11px;color:#111;-webkit-text-stroke:0.2px #111;">+0.08</div>
<div class="t" style="right:463px;text-align:right;top:309.0px;height:20px;line-height:20px;font-size:11px;color:#c83232;-webkit-text-stroke:0.2px #c83232;">-706,102.76</div>
<div class="t" style="left:359px;top:330.0px;height:20px;line-height:20px;font-size:11px;color:#111;-webkit-text-stroke:0.2px #111;">4/21/2017</div>
<div class="t" style="left:458.5px;top:330.0px;height:20px;line-height:20px;font-size:11px;color:#111;-webkit-text-stroke:0.2px #111;">Bought</div>
<div class="t" style="left:539.5px;top:330.0px;height:20px;line-height:20px;font-size:11.4px;color:#111;-webkit-text-stroke:0.2px #111;">Exact Sciences Corp</div>
<div class="t" style="left:755.5px;top:330.0px;height:20px;line-height:20px;font-size:11.2px;color:#111;-webkit-text-stroke:0.2px #111;">139 shares @ 23.75</div>
<div class="t" style="right:796px;text-align:right;top:330.0px;height:20px;line-height:20px;font-size:11px;color:#111;-webkit-text-stroke:0.2px #111;">654</div>
<div class="t" style="right:685px;text-align:right;top:330.0px;height:20px;line-height:20px;font-size:11px;color:#111;-webkit-text-stroke:0.2px #111;">+3,306.20</div>
<div class="t" style="right:574px;text-align:right;top:330.0px;height:20px;line-height:20px;font-size:11px;color:#c83232;-webkit-text-stroke:0.2px #c83232;">-3,306.20</div>
<div class="t" style="right:463px;text-align:right;top:330.0px;height:20px;line-height:20px;font-size:11px;color:#c83232;-webkit-text-stroke:0.2px #c83232;">-709,408.96</div>
<div class="t" style="left:359px;top:351.0px;height:20px;line-height:20px;font-size:11px;color:#111;-webkit-text-stroke:0.2px #111;">4/24/2017</div>
<div class="t" style="left:458.5px;top:351.0px;height:20px;line-height:20px;font-size:11px;color:#111;-webkit-text-stroke:0.2px #111;">Sold</div>
<div class="t" style="left:539.5px;top:351.0px;height:20px;line-height:20px;font-size:11.4px;color:#111;-webkit-text-stroke:0.2px #111;">Cavium Inc</div>
<div class="t" style="left:755.5px;top:351.0px;height:20px;line-height:20px;font-size:11.2px;color:#111;-webkit-text-stroke:0.2px #111;">47 shares @ 70.984</div>
<div class="t" style="right:796px;text-align:right;top:351.0px;height:20px;line-height:20px;font-size:11px;color:#111;-webkit-text-stroke:0.2px #111;">51</div>
<div class="t" style="right:685px;text-align:right;top:351.0px;height:20px;line-height:20px;font-size:11px;color:#c83232;-webkit-text-stroke:0.2px #c83232;">-3,331.22</div>
<div class="t" style="right:574px;text-align:right;top:351.0px;height:20px;line-height:20px;font-size:11px;color:#111;-webkit-text-stroke:0.2px #111;">+3,331.22</div>
<div class="t" style="right:463px;text-align:right;top:351.0px;height:20px;line-height:20px;font-size:11px;color:#c83232;-webkit-text-stroke:0.2px #c83232;">-706,077.74</div>
<div class="t" style="left:359px;top:372.0px;height:20px;line-height:20px;font-size:11px;color:#111;-webkit-text-stroke:0.2px #111;">4/24/2017</div>
<div class="t" style="left:458.5px;top:372.0px;height:20px;line-height:20px;font-size:11px;color:#111;-webkit-text-stroke:0.2px #111;">Bought</div>
<div class="t" style="left:539.5px;top:372.0px;height:20px;line-height:20px;font-size:11.4px;color:#111;-webkit-text-stroke:0.2px #111;">Mazor Robotics Ltd</div>
<div class="t" style="left:755.5px;top:372.0px;height:20px;line-height:20px;font-size:11.2px;color:#111;-webkit-text-stroke:0.2px #111;">97 shares @ 34.2194</div>
<div class="t" style="right:796px;text-align:right;top:372.0px;height:20px;line-height:20px;font-size:11px;color:#111;-webkit-text-stroke:0.2px #111;">97</div>
<div class="t" style="right:685px;text-align:right;top:372.0px;height:20px;line-height:20px;font-size:11px;color:#111;-webkit-text-stroke:0.2px #111;">+3,324.23</div>
<div class="t" style="right:574px;text-align:right;top:372.0px;height:20px;line-height:20px;font-size:11px;color:#c83232;-webkit-text-stroke:0.2px #c83232;">-3,324.23</div>
<div class="t" style="right:463px;text-align:right;top:372.0px;height:20px;line-height:20px;font-size:11px;color:#c83232;-webkit-text-stroke:0.2px #c83232;">-709,401.97</div>
<div class="t" style="left:359px;top:393.0px;height:20px;line-height:20px;font-size:11px;color:#111;-webkit-text-stroke:0.2px #111;">4/25/2017</div>
<div class="t" style="left:458.5px;top:393.0px;height:20px;line-height:20px;font-size:11px;color:#111;-webkit-text-stroke:0.2px #111;">Bought</div>
<div class="t" style="left:539.5px;top:393.0px;height:20px;line-height:20px;font-size:11.4px;color:#111;-webkit-text-stroke:0.2px #111;">Align Techonology Inc</div>
<div class="t" style="left:755.5px;top:393.0px;height:20px;line-height:20px;font-size:11.2px;color:#111;-webkit-text-stroke:0.2px #111;">28 shares @ 118.4999</div>
<div class="t" style="right:796px;text-align:right;top:393.0px;height:20px;line-height:20px;font-size:11px;color:#111;-webkit-text-stroke:0.2px #111;">28</div>
<div class="t" style="right:685px;text-align:right;top:393.0px;height:20px;line-height:20px;font-size:11px;color:#111;-webkit-text-stroke:0.2px #111;">+3,322.95</div>
<div class="t" style="right:574px;text-align:right;top:393.0px;height:20px;line-height:20px;font-size:11px;color:#c83232;-webkit-text-stroke:0.2px #c83232;">-3,322.95</div>
<div class="t" style="right:463px;text-align:right;top:393.0px;height:20px;line-height:20px;font-size:11px;color:#c83232;-webkit-text-stroke:0.2px #c83232;">-712,724.92</div>
<div class="t" style="left:359px;top:414.0px;height:20px;line-height:20px;font-size:11px;color:#111;-webkit-text-stroke:0.2px #111;">4/25/2017</div>
<div class="t" style="left:458.5px;top:414.0px;height:20px;line-height:20px;font-size:11px;color:#111;-webkit-text-stroke:0.2px #111;">Bought</div>
<div class="t" style="left:539.5px;top:414.0px;height:20px;line-height:20px;font-size:11.4px;color:#111;-webkit-text-stroke:0.2px #111;">Sensata Technologies Holding NV</div>
<div class="t" style="left:755.5px;top:414.0px;height:20px;line-height:20px;font-size:11.2px;color:#111;-webkit-text-stroke:0.2px #111;">80 shares @ 41.4492</div>
<div class="t" style="right:796px;text-align:right;top:414.0px;height:20px;line-height:20px;font-size:11px;color:#111;-webkit-text-stroke:0.2px #111;">80</div>
<div class="t" style="right:685px;text-align:right;top:414.0px;height:20px;line-height:20px;font-size:11px;color:#111;-webkit-text-stroke:0.2px #111;">+3,320.89</div>
<div class="t" style="right:574px;text-align:right;top:414.0px;height:20px;line-height:20px;font-size:11px;color:#c83232;-webkit-text-stroke:0.2px #c83232;">-3,320.89</div>
<div class="t" style="right:463px;text-align:right;top:414.0px;height:20px;line-height:20px;font-size:11px;color:#c83232;-webkit-text-stroke:0.2px #c83232;">-716,045.81</div>
<div class="t" style="left:359px;top:435.0px;height:20px;line-height:20px;font-size:11px;color:#111;-webkit-text-stroke:0.2px #111;">4/25/2017</div>
<div class="t" style="left:458.5px;top:435.0px;height:20px;line-height:20px;font-size:11px;color:#111;-webkit-text-stroke:0.2px #111;">Bought</div>
<div class="t" style="left:539.5px;top:435.0px;height:20px;line-height:20px;font-size:11.4px;color:#111;-webkit-text-stroke:0.2px #111;">Shopify Inc</div>
<div class="t" style="left:755.5px;top:435.0px;height:20px;line-height:20px;font-size:11.2px;color:#111;-webkit-text-stroke:0.2px #111;">44 shares @ 75.18</div>
<div class="t" style="right:796px;text-align:right;top:435.0px;height:20px;line-height:20px;font-size:11px;color:#111;-webkit-text-stroke:0.2px #111;">201</div>
<div class="t" style="right:685px;text-align:right;top:435.0px;height:20px;line-height:20px;font-size:11px;color:#111;-webkit-text-stroke:0.2px #111;">+3,312.87</div>
<div class="t" style="right:574px;text-align:right;top:435.0px;height:20px;line-height:20px;font-size:11px;color:#c83232;-webkit-text-stroke:0.2px #c83232;">-3,312.87</div>
<div class="t" style="right:463px;text-align:right;top:435.0px;height:20px;line-height:20px;font-size:11px;color:#c83232;-webkit-text-stroke:0.2px #c83232;">-719,358.68</div>
<div class="t" style="left:359px;top:456.0px;height:20px;line-height:20px;font-size:11px;color:#111;-webkit-text-stroke:0.2px #111;">4/25/2017</div>
<div class="t" style="left:458.5px;top:456.0px;height:20px;line-height:20px;font-size:11px;color:#111;-webkit-text-stroke:0.2px #111;">Bought</div>
<div class="t" style="left:539.5px;top:456.0px;height:20px;line-height:20px;font-size:11.4px;color:#111;-webkit-text-stroke:0.2px #111;">Eagle Materials Inc</div>
<div class="t" style="left:755.5px;top:456.0px;height:20px;line-height:20px;font-size:11.2px;color:#111;-webkit-text-stroke:0.2px #111;">34 shares @ 96.27</div>
<div class="t" style="right:796px;text-align:right;top:456.0px;height:20px;line-height:20px;font-size:11px;color:#111;-webkit-text-stroke:0.2px #111;">133</div>
<div class="t" style="right:685px;text-align:right;top:456.0px;height:20px;line-height:20px;font-size:11px;color:#111;-webkit-text-stroke:0.2px #111;">+3,273.18</div>
<div class="t" style="right:574px;text-align:right;top:456.0px;height:20px;line-height:20px;font-size:11px;color:#c83232;-webkit-text-stroke:0.2px #c83232;">-3,273.18</div>
<div class="t" style="right:463px;text-align:right;top:456.0px;height:20px;line-height:20px;font-size:11px;color:#c83232;-webkit-text-stroke:0.2px #c83232;">-722,631.86</div>
<div class="t" style="left:359px;top:477.0px;height:20px;line-height:20px;font-size:11px;color:#111;-webkit-text-stroke:0.2px #111;">4/25/2017</div>
<div class="t" style="left:458.5px;top:477.0px;height:20px;line-height:20px;font-size:11px;color:#111;-webkit-text-stroke:0.2px #111;">Sold</div>
<div class="t" style="left:539.5px;top:477.0px;height:20px;line-height:20px;font-size:11.4px;color:#111;-webkit-text-stroke:0.2px #111;">Eagle Materials Inc</div>
<div class="t" style="left:755.5px;top:477.0px;height:20px;line-height:20px;font-size:11.2px;color:#111;-webkit-text-stroke:0.2px #111;">68 shares @ 96.6882</div>
<div class="t" style="right:796px;text-align:right;top:477.0px;height:20px;line-height:20px;font-size:11px;color:#111;-webkit-text-stroke:0.2px #111;">65</div>
<div class="t" style="right:685px;text-align:right;top:477.0px;height:20px;line-height:20px;font-size:11px;color:#c83232;-webkit-text-stroke:0.2px #c83232;">-6,574.65</div>
<div class="t" style="right:574px;text-align:right;top:477.0px;height:20px;line-height:20px;font-size:11px;color:#111;-webkit-text-stroke:0.2px #111;">+6,574.65</div>
<div class="t" style="right:463px;text-align:right;top:477.0px;height:20px;line-height:20px;font-size:11px;color:#c83232;-webkit-text-stroke:0.2px #c83232;">-716,057.21</div>
<div class="t" style="left:359px;top:498.0px;height:20px;line-height:20px;font-size:11px;color:#111;-webkit-text-stroke:0.2px #111;">4/25/2017</div>
<div class="t" style="left:458.5px;top:498.0px;height:20px;line-height:20px;font-size:11px;color:#111;-webkit-text-stroke:0.2px #111;">Bought</div>
<div class="t" style="left:539.5px;top:498.0px;height:20px;line-height:20px;font-size:11.4px;color:#111;-webkit-text-stroke:0.2px #111;">Mazor Robotics Ltd</div>
<div class="t" style="left:755.5px;top:498.0px;height:20px;line-height:20px;font-size:11.2px;color:#111;-webkit-text-stroke:0.2px #111;">100 shares @ 33.1891</div>
<div class="t" style="right:796px;text-align:right;top:498.0px;height:20px;line-height:20px;font-size:11px;color:#111;-webkit-text-stroke:0.2px #111;">197</div>
<div class="t" style="right:685px;text-align:right;top:498.0px;height:20px;line-height:20px;font-size:11px;color:#111;-webkit-text-stroke:0.2px #111;">+3,323.86</div>
<div class="t" style="right:574px;text-align:right;top:498.0px;height:20px;line-height:20px;font-size:11px;color:#c83232;-webkit-text-stroke:0.2px #c83232;">-3,323.86</div>
<div class="t" style="right:463px;text-align:right;top:498.0px;height:20px;line-height:20px;font-size:11px;color:#c83232;-webkit-text-stroke:0.2px #c83232;">-719,381.07</div>
<div class="t" style="left:359px;top:519.0px;height:20px;line-height:20px;font-size:11px;color:#111;-webkit-text-stroke:0.2px #111;">4/25/2017</div>
<div class="t" style="left:458.5px;top:519.0px;height:20px;line-height:20px;font-size:11px;color:#111;-webkit-text-stroke:0.2px #111;">Bought</div>
<div class="t" style="left:539.5px;top:519.0px;height:20px;line-height:20px;font-size:11.4px;color:#111;-webkit-text-stroke:0.2px #111;">U S Concrete Inc</div>
<div class="t" style="left:755.5px;top:519.0px;height:20px;line-height:20px;font-size:11.2px;color:#111;-webkit-text-stroke:0.2px #111;">53 shares @ 62.695</div>
<div class="t" style="right:796px;text-align:right;top:519.0px;height:20px;line-height:20px;font-size:11px;color:#111;-webkit-text-stroke:0.2px #111;">102</div>
<div class="t" style="right:685px;text-align:right;top:519.0px;height:20px;line-height:20px;font-size:11px;color:#111;-webkit-text-stroke:0.2px #111;">+3,327.79</div>
<div class="t" style="right:574px;text-align:right;top:519.0px;height:20px;line-height:20px;font-size:11px;color:#c83232;-webkit-text-stroke:0.2px #c83232;">-3,327.79</div>
<div class="t" style="right:463px;text-align:right;top:519.0px;height:20px;line-height:20px;font-size:11px;color:#c83232;-webkit-text-stroke:0.2px #c83232;">-722,708.86</div>
<div class="t" style="left:359px;top:540.0px;height:20px;line-height:20px;font-size:11px;color:#111;-webkit-text-stroke:0.2px #111;">4/25/2017</div>
<div class="t" style="left:458.5px;top:540.0px;height:20px;line-height:20px;font-size:11px;color:#111;-webkit-text-stroke:0.2px #111;">Bought</div>
<div class="t" style="left:539.5px;top:540.0px;height:20px;line-height:20px;font-size:11.4px;color:#111;-webkit-text-stroke:0.2px #111;">Wayfair Inc</div>
<div class="t" style="left:755.5px;top:540.0px;height:20px;line-height:20px;font-size:11.2px;color:#111;-webkit-text-stroke:0.2px #111;">76 shares @ 43.69</div>
<div class="t" style="right:796px;text-align:right;top:540.0px;height:20px;line-height:20px;font-size:11px;color:#111;-webkit-text-stroke:0.2px #111;">76</div>
<div class="t" style="right:685px;text-align:right;top:540.0px;height:20px;line-height:20px;font-size:11px;color:#111;-webkit-text-stroke:0.2px #111;">+3,325.39</div>
<div class="t" style="right:574px;text-align:right;top:540.0px;height:20px;line-height:20px;font-size:11px;color:#c83232;-webkit-text-stroke:0.2px #c83232;">-3,325.39</div>
<div class="t" style="right:463px;text-align:right;top:540.0px;height:20px;line-height:20px;font-size:11px;color:#c83232;-webkit-text-stroke:0.2px #c83232;">-726,034.25</div>
<div class="t" style="left:308px;top:561.0px;height:20px;line-height:20px;font-size:11px;color:#111;font-weight:700;">R</div>
<div class="t" style="left:359px;top:561.0px;height:20px;line-height:20px;font-size:11px;color:#111;-webkit-text-stroke:0.2px #111;">4/25/2017</div>
<div class="t" style="left:458.5px;top:561.0px;height:20px;line-height:20px;font-size:11px;color:#111;-webkit-text-stroke:0.2px #111;">Withdraw</div>
<div class="t" style="left:539.5px;top:561.0px;height:20px;line-height:20px;font-size:11.4px;color:#111;-webkit-text-stroke:0.2px #111;">Registration Fee Trust</div>
<div class="t" style="left:755.5px;top:561.0px;height:20px;line-height:20px;font-size:11.2px;color:#111;-webkit-text-stroke:0.2px #111;">Registration Fee Trust</div>
<div class="t" style="right:574px;text-align:right;top:561.0px;height:20px;line-height:20px;font-size:11px;color:#c83232;-webkit-text-stroke:0.2px #c83232;">-75.00</div>
<div class="t" style="right:463px;text-align:right;top:561.0px;height:20px;line-height:20px;font-size:11px;color:#c83232;-webkit-text-stroke:0.2px #c83232;">-726,109.25</div>
<div class="t" style="left:359px;top:582.0px;height:20px;line-height:20px;font-size:11px;color:#111;-webkit-text-stroke:0.2px #111;">4/26/2017</div>
<div class="t" style="left:458.5px;top:582.0px;height:20px;line-height:20px;font-size:11px;color:#111;-webkit-text-stroke:0.2px #111;">Div</div>
<div class="t" style="left:539.5px;top:582.0px;height:20px;line-height:20px;font-size:11.4px;color:#111;-webkit-text-stroke:0.2px #111;">Winnebago Industries Inc</div>
<div class="t" style="right:796px;text-align:right;top:582.0px;height:20px;line-height:20px;font-size:11px;color:#111;-webkit-text-stroke:0.2px #111;">95</div>
<div class="t" style="right:574px;text-align:right;top:582.0px;height:20px;line-height:20px;font-size:11px;color:#111;-webkit-text-stroke:0.2px #111;">+9.50</div>
<div class="t" style="right:463px;text-align:right;top:582.0px;height:20px;line-height:20px;font-size:11px;color:#c83232;-webkit-text-stroke:0.2px #c83232;">-726,099.75</div>
<div class="t" style="left:308px;top:603.0px;height:20px;line-height:20px;font-size:11px;color:#111;font-weight:700;">R</div>
<div class="t" style="left:359px;top:603.0px;height:20px;line-height:20px;font-size:11px;color:#111;-webkit-text-stroke:0.2px #111;">4/27/2017</div>
<div class="t" style="left:458.5px;top:603.0px;height:20px;line-height:20px;font-size:11px;color:#111;-webkit-text-stroke:0.2px #111;">XOut</div>
<div class="t" style="left:755.5px;top:603.0px;height:20px;line-height:20px;font-size:11.2px;color:#111;-webkit-text-stroke:0.2px #111;">Old National Bank</div>
<div class="t" style="right:574px;text-align:right;top:603.0px;height:20px;line-height:20px;font-size:11px;color:#c83232;-webkit-text-stroke:0.2px #c83232;">-500.00</div>
<div class="t" style="right:463px;text-align:right;top:603.0px;height:20px;line-height:20px;font-size:11px;color:#c83232;-webkit-text-stroke:0.2px #c83232;">-726,599.75</div>
<div class="t" style="left:359px;top:624.0px;height:20px;line-height:20px;font-size:11px;color:#111;-webkit-text-stroke:0.2px #111;">5/31/2017</div>
<div class="t" style="left:458.5px;top:624.0px;height:20px;line-height:20px;font-size:11px;color:#111;-webkit-text-stroke:0.2px #111;">XIn</div>
<div class="t" style="left:755.5px;top:624.0px;height:20px;line-height:20px;font-size:11.2px;color:#111;-webkit-text-stroke:0.2px #111;">Old National Bank</div>
<div class="t" style="right:574px;text-align:right;top:624.0px;height:20px;line-height:20px;font-size:11px;color:#111;-webkit-text-stroke:0.2px #111;">+750.00</div>
<div class="t" style="right:463px;text-align:right;top:624.0px;height:20px;line-height:20px;font-size:11px;color:#c83232;-webkit-text-stroke:0.2px #c83232;">-725,849.75</div>
<div class="t" style="left:359px;top:645.0px;height:20px;line-height:20px;font-size:11px;color:#111;-webkit-text-stroke:0.2px #111;">6/9/2017</div>
<div class="t" style="left:458.5px;top:645.0px;height:20px;line-height:20px;font-size:11px;color:#111;-webkit-text-stroke:0.2px #111;">XIn</div>
<div class="t" style="left:755.5px;top:645.0px;height:20px;line-height:20px;font-size:11.2px;color:#111;-webkit-text-stroke:0.2px #111;">Old National Bank</div>
<div class="t" style="right:574px;text-align:right;top:645.0px;height:20px;line-height:20px;font-size:11px;color:#111;-webkit-text-stroke:0.2px #111;">+225.00</div>
<div class="t" style="right:463px;text-align:right;top:645.0px;height:20px;line-height:20px;font-size:11px;color:#c83232;-webkit-text-stroke:0.2px #c83232;">-725,624.75</div>
<div class="t" style="left:359px;top:666.0px;height:20px;line-height:20px;font-size:11px;color:#111;-webkit-text-stroke:0.2px #111;">6/19/2017</div>
<div class="t" style="left:458.5px;top:666.0px;height:20px;line-height:20px;font-size:11px;color:#111;-webkit-text-stroke:0.2px #111;">Removed</div>
<div class="t" style="left:539.5px;top:666.0px;height:20px;line-height:20px;font-size:11.4px;color:#111;-webkit-text-stroke:0.2px #111;">Citrix Systems Inc</div>
<div class="t" style="left:755.5px;top:666.0px;height:20px;line-height:20px;font-size:11.2px;color:#111;-webkit-text-stroke:0.2px #111;">83 shares</div>
<div class="t" style="right:796px;text-align:right;top:666.0px;height:20px;line-height:20px;font-size:11px;color:#111;-webkit-text-stroke:0.2px #111;">60</div>
<div class="t" style="right:463px;text-align:right;top:666.0px;height:20px;line-height:20px;font-size:11px;color:#c83232;-webkit-text-stroke:0.2px #c83232;">-725,624.75</div>
<div class="t" style="left:359px;top:687.0px;height:20px;line-height:20px;font-size:11px;color:#111;-webkit-text-stroke:0.2px #111;">6/19/2017</div>
<div class="t" style="left:458.5px;top:687.0px;height:20px;line-height:20px;font-size:11px;color:#111;-webkit-text-stroke:0.2px #111;">Added</div>
<div class="t" style="left:539.5px;top:687.0px;height:20px;line-height:20px;font-size:11.4px;color:#111;-webkit-text-stroke:0.2px #111;">Citrix Systems Inc</div>
<div class="t" style="left:755.5px;top:687.0px;height:20px;line-height:20px;font-size:11.2px;color:#111;-webkit-text-stroke:0.2px #111;">37 shares @ 1.50027</div>
<div class="t" style="right:796px;text-align:right;top:687.0px;height:20px;line-height:20px;font-size:11px;color:#111;-webkit-text-stroke:0.2px #111;">97</div>
<div class="t" style="right:685px;text-align:right;top:687.0px;height:20px;line-height:20px;font-size:11px;color:#111;-webkit-text-stroke:0.2px #111;">+55.51</div>
<div class="t" style="right:574px;text-align:right;top:687.0px;height:20px;line-height:20px;font-size:11px;color:#c83232;-webkit-text-stroke:0.2px #c83232;">-55.51</div>
<div class="t" style="right:463px;text-align:right;top:687.0px;height:20px;line-height:20px;font-size:11px;color:#c83232;-webkit-text-stroke:0.2px #c83232;">-725,624.75</div>
<div class="t" style="left:359px;top:708.0px;height:20px;line-height:20px;font-size:11px;color:#111;-webkit-text-stroke:0.2px #111;">6/19/2017</div>
<div class="t" style="left:458.5px;top:708.0px;height:20px;line-height:20px;font-size:11px;color:#111;-webkit-text-stroke:0.2px #111;">Added</div>
<div class="t" style="left:539.5px;top:708.0px;height:20px;line-height:20px;font-size:11.4px;color:#111;-webkit-text-stroke:0.2px #111;">Citrix Systems Inc</div>
<div class="t" style="left:755.5px;top:708.0px;height:20px;line-height:20px;font-size:11.2px;color:#111;-webkit-text-stroke:0.2px #111;">46 shares @ 1.508043</div>
<div class="t" style="right:796px;text-align:right;top:708.0px;height:20px;line-height:20px;font-size:11px;color:#111;-webkit-text-stroke:0.2px #111;">143</div>
<div class="t" style="right:685px;text-align:right;top:708.0px;height:20px;line-height:20px;font-size:11px;color:#111;-webkit-text-stroke:0.2px #111;">+69.37</div>
<div class="t" style="right:574px;text-align:right;top:708.0px;height:20px;line-height:20px;font-size:11px;color:#c83232;-webkit-text-stroke:0.2px #c83232;">-69.37</div>
<div class="t" style="right:463px;text-align:right;top:708.0px;height:20px;line-height:20px;font-size:11px;color:#c83232;-webkit-text-stroke:0.2px #c83232;">-725,624.75</div>
<div class="t" style="left:359px;top:729.0px;height:20px;line-height:20px;font-size:11px;color:#111;-webkit-text-stroke:0.2px #111;">6/20/2017</div>
<div class="t" style="left:458.5px;top:729.0px;height:20px;line-height:20px;font-size:11px;color:#111;-webkit-text-stroke:0.2px #111;">Added</div>
<div class="t" style="left:539.5px;top:729.0px;height:20px;line-height:20px;font-size:11.4px;color:#111;-webkit-text-stroke:0.2px #111;">Logmein Inc</div>
<div class="t" style="right:796px;text-align:right;top:729.0px;height:20px;line-height:20px;font-size:11px;color:#111;-webkit-text-stroke:0.2px #111;">32.000013</div>
<div class="t" style="right:463px;text-align:right;top:729.0px;height:20px;line-height:20px;font-size:11px;color:#c83232;-webkit-text-stroke:0.2px #c83232;">-725,624.75</div>
<div class="t" style="left:359px;top:750.0px;height:20px;line-height:20px;font-size:11px;color:#111;-webkit-text-stroke:0.2px #111;">7/13/2017</div>
<div class="t" style="left:458.5px;top:750.0px;height:20px;line-height:20px;font-size:11px;color:#111;-webkit-text-stroke:0.2px #111;">XOut</div>
<div class="t" style="left:755.5px;top:750.0px;height:20px;line-height:20px;font-size:11.2px;color:#111;-webkit-text-stroke:0.2px #111;">Old National Bank</div>
<div class="t" style="right:574px;text-align:right;top:750.0px;height:20px;line-height:20px;font-size:11px;color:#c83232;-webkit-text-stroke:0.2px #c83232;">-3,000.00</div>
<div class="t" style="right:463px;text-align:right;top:750.0px;height:20px;line-height:20px;font-size:11px;color:#c83232;-webkit-text-stroke:0.2px #c83232;">-728,624.75</div>
<div class="t" style="left:359px;top:771.0px;height:20px;line-height:20px;font-size:11px;color:#111;-webkit-text-stroke:0.2px #111;">6/25/2018</div>
<div class="t" style="left:458.5px;top:771.0px;height:20px;line-height:20px;font-size:11px;color:#111;-webkit-text-stroke:0.2px #111;">Withdraw</div>
<div class="t" style="left:539.5px;top:771.0px;height:20px;line-height:20px;font-size:11.4px;color:#111;-webkit-text-stroke:0.2px #111;">Burger King</div>
<div class="t" style="left:755.5px;top:771.0px;height:20px;line-height:20px;font-size:11.2px;color:#111;-webkit-text-stroke:0.2px #111;">Burger King</div>
<div class="t" style="right:574px;text-align:right;top:771.0px;height:20px;line-height:20px;font-size:11px;color:#c83232;-webkit-text-stroke:0.2px #c83232;">-100.00</div>
<div class="t" style="right:463px;text-align:right;top:771.0px;height:20px;line-height:20px;font-size:11px;color:#c83232;-webkit-text-stroke:0.2px #c83232;">-728,724.75</div>
<div class="b" style="left:235px;top:791px;width:1627px;height:42px;background:#8a98ae;"></div>
<div class="b" style="left:237px;top:793px;width:1623px;height:18px;background:#c6d2e9;"></div>
<div class="b" style="left:237px;top:812px;width:1623px;height:19px;background:#c6d2e9;"></div>
<div class="b" style="left:297px;top:793px;width:1px;height:18px;background:#d6def0;"></div>
<div class="b" style="left:348px;top:793px;width:1px;height:18px;background:#d6def0;"></div>
<div class="b" style="left:447px;top:793px;width:1px;height:18px;background:#d6def0;"></div>
<div class="b" style="left:528px;top:793px;width:1px;height:18px;background:#d6def0;"></div>
<div class="b" style="left:744px;top:793px;width:1px;height:18px;background:#d6def0;"></div>
<div class="b" style="left:875px;top:793px;width:1px;height:18px;background:#d6def0;"></div>
<div class="b" style="left:1006px;top:793px;width:1px;height:18px;background:#d6def0;"></div>
<div class="b" style="left:1087px;top:793px;width:1px;height:18px;background:#d6def0;"></div>
<div class="b" style="left:1198px;top:793px;width:1px;height:18px;background:#d6def0;"></div>
<div class="b" style="left:1309px;top:793px;width:1px;height:18px;background:#d6def0;"></div>
<div class="b" style="left:1420px;top:793px;width:1px;height:18px;background:#d6def0;"></div>
<div class="b" style="left:348px;top:812px;width:1px;height:19px;background:#d6def0;"></div>
<div class="b" style="left:447px;top:812px;width:1px;height:19px;background:#d6def0;"></div>
<div class="b" style="left:528px;top:812px;width:1px;height:19px;background:#d6def0;"></div>
<div class="b" style="left:744px;top:812px;width:1px;height:19px;background:#d6def0;"></div>
<div class="b" style="left:925px;top:812px;width:1px;height:19px;background:#d6def0;"></div>
<div class="b" style="left:1107px;top:812px;width:1px;height:19px;background:#d6def0;"></div>
<div class="b" style="left:312px;top:795px;width:18px;height:13px;background:#ffffff;"></div>
<svg class="b" style="left:319.5px;top:799.5px" width="9" height="5"><path d="M0 0 L8.5 0 L4.25 4.5 Z" fill="#2f6aa3"></path></svg>
<div class="t" style="left:359px;top:791.5px;height:20px;line-height:20px;font-size:11px;color:#111;-webkit-text-stroke:0.2px #111;">6/27/2018</div>
<div class="t" style="left:458px;top:791.5px;height:20px;line-height:20px;font-size:11px;color:#111;font-style:italic;-webkit-text-stroke:0.2px #111;">Action</div>
<div class="b" style="left:1233px;top:816px;width:34px;height:13px;background:#ffffff;"></div>
<div class="t" style="left:1233px;top:811.5px;width:34px;height:20px;line-height:20px;font-size:11px;color:#3569a0;-webkit-text-stroke:0.15px #3569a0;text-align:center;">Enter</div>
<div class="b" style="left:1277px;top:816px;width:27px;height:13px;background:#ffffff;"></div>
<div class="t" style="left:1277px;top:811.5px;width:27px;height:20px;line-height:20px;font-size:11px;color:#3569a0;-webkit-text-stroke:0.15px #3569a0;text-align:center;">Edit</div>
<div class="b" style="left:1314px;top:816px;width:40px;height:13px;background:#ffffff;"></div>
<div class="t" style="left:1314px;top:811.5px;width:40px;height:20px;line-height:20px;font-size:11px;color:#3569a0;-webkit-text-stroke:0.15px #3569a0;text-align:center;">Delete</div>
<div class="b" style="left:1363px;top:816px;width:41px;height:13px;background:#ffffff;"></div>
<div class="t" style="left:1363px;top:811.5px;width:41px;height:20px;line-height:20px;font-size:11px;color:#3569a0;-webkit-text-stroke:0.15px #3569a0;text-align:center;">Attach</div>
<div class="b" style="left:1862px;top:833px;width:11px;height:52px;background:#ffffff;"></div>
<div class="b" style="left:1863px;top:140px;width:10px;height:692px;background:#eeeeee;"></div>
<svg class="b" style="left:1866.5px;top:146px" width="9" height="7"><path d="M0.8 5.8 L4.5 2 L8.2 5.8" fill="none" stroke="#444" stroke-width="1.8"></path></svg>
<div class="b" style="left:1863px;top:799px;width:10px;height:16px;background:#c8c8c8;"></div>
<svg class="b" style="left:1866.5px;top:822px" width="9" height="7"><path d="M0.8 1.2 L4.5 5 L8.2 1.2" fill="none" stroke="#444" stroke-width="1.8"></path></svg>
<div class="t" style="right: 243px; text-align: right; top: 847px; height: 20px; line-height: 20px; font-size: 11px; color: rgb(17, 17, 17); font-weight: 700; transform: scaleX(0.9484); transform-origin: 100% 0px;">Securities Value:</div>
<div class="t" style="right: 167px; text-align: right; top: 847px; height: 20px; line-height: 20px; font-size: 11px; color: rgb(17, 17, 17); -webkit-text-stroke: 0.2px rgb(17, 17, 17); transform: scaleX(0.9878); transform-origin: 100% 0px;">$1,353,298.52</div>
<div class="t" style="right: 84px; text-align: right; top: 847px; height: 20px; line-height: 20px; font-size: 11px; color: rgb(17, 17, 17); font-weight: 700; transform: scaleX(0.9299); transform-origin: 100% 0px;">Cash Balance:</div>
<div class="t" style="right: 2.5px; text-align: right; top: 847px; height: 20px; line-height: 20px; font-size: 11px; color: rgb(200, 50, 50); -webkit-text-stroke: 0.2px rgb(200, 50, 50); transform: scaleX(0.9793); transform-origin: 100% 0px;">-$728,724.75</div>
<div class="t" style="right: 85.5px; text-align: right; top: 864px; height: 20px; line-height: 20px; font-size: 11px; color: rgb(17, 17, 17); font-weight: 700; transform: scaleX(0.9956); transform-origin: 100% 0px;">Total Market Value:</div>
<div class="t" style="right: 2.5px; text-align: right; top: 864px; height: 20px; line-height: 20px; font-size: 11px; color: rgb(17, 17, 17); -webkit-text-stroke: 0.2px rgb(17, 17, 17); transform: scaleX(0.9776); transform-origin: 100% 0px;">$624,573.77</div>
<div class="b" style="left:234px;top:885px;width:1639px;height:6px;background:#aaaaaa;"></div>
<div class="b" style="left:234px;top:891px;width:1639px;height:35px;background:#ffffff;"></div>
<div class="b" style="left:234px;top:926px;width:1639px;height:1px;background:#b4b4b4;"></div>
<svg class="b" style="left:245px;top:903px" width="12" height="9"><path d="M1 1.5 L6 7 L11 1.5" fill="none" stroke="#666" stroke-width="1.8"></path></svg>
<div class="t" style="left: 279.5px; top: 897px; height: 20px; line-height: 20px; font-size: 13px; color: rgb(17, 17, 17); -webkit-text-stroke: 0.3px rgb(17, 17, 17); transform: scaleX(0.999); transform-origin: 0px 0px;">Download Transactions</div>
<div class="t" style="left: 438px; top: 897px; height: 20px; line-height: 20px; font-size: 13px; color: rgb(17, 17, 17); -webkit-text-stroke: 0.3px rgb(17, 17, 17); transform: scaleX(0.991); transform-origin: 0px 0px;">Bill and Income Reminders (0 Due)</div>
<div class="t" style="left: 661px; top: 897px; height: 20px; line-height: 20px; font-size: 13px; color: rgb(17, 17, 17); -webkit-text-stroke: 0.3px rgb(17, 17, 17); transform: scaleX(0.9793); transform-origin: 0px 0px;">Placeholder Entries (0)</div>
<div class="b" style="left:428px;top:923px;width:220px;height:3px;background:#2b6ca3;"></div>
<div class="b" style="left:248px;top:940px;width:1619px;height:1px;background:#cfcfcf;"></div>
<div class="b" style="left:248px;top:940px;width:1px;height:74px;background:#cfcfcf;"></div>
<div class="b" style="left:1866px;top:940px;width:1px;height:74px;background:#cfcfcf;"></div>
<div class="b" style="left:249px;top:941px;width:1617px;height:20px;background:#f7f7f7;"></div>
<div class="b" style="left:249px;top:961px;width:1617px;height:1px;background:#cfcfcf;"></div>
<div class="b" style="left:249px;top:962px;width:1617px;height:24px;background:#ffffff;"></div>
<div class="b" style="left:249px;top:986px;width:1617px;height:1px;background:#cfcfcf;"></div>
<div class="b" style="left:249px;top:987px;width:1617px;height:26px;background:#ececec;"></div>
<div class="b" style="left:248px;top:1013px;width:1619px;height:1px;background:#cfcfcf;"></div>
<div class="b" style="left:350px;top:941px;width:1px;height:20px;background:#d4d4d4;"></div>
<div class="b" style="left:431px;top:941px;width:1px;height:20px;background:#d4d4d4;"></div>
<div class="b" style="left:1451px;top:941px;width:1px;height:20px;background:#d4d4d4;"></div>
<div class="b" style="left:1543px;top:941px;width:1px;height:20px;background:#d4d4d4;"></div>
<div class="b" style="left:1580px;top:941px;width:1px;height:20px;background:#d4d4d4;"></div>
<div class="b" style="left:1679px;top:941px;width:1px;height:20px;background:#d4d4d4;"></div>
<div class="b" style="left:1718px;top:941px;width:1px;height:20px;background:#d4d4d4;"></div>
<div class="t" style="left:256.5px;top:941.0px;height:20px;line-height:20px;font-size:11.2px;color:#111;-webkit-text-stroke:0.2px #111;">Status</div>
<div class="t" style="left:358.5px;top:941.0px;height:20px;line-height:20px;font-size:11.2px;color:#111;-webkit-text-stroke:0.2px #111;">Due</div>
<div class="t" style="left:439px;top:941.0px;height:20px;line-height:20px;font-size:11.2px;color:#111;-webkit-text-stroke:0.2px #111;">Pay To / Receive From</div>
<div class="t" style="left:1459px;top:941.0px;height:20px;line-height:20px;font-size:11.2px;color:#111;-webkit-text-stroke:0.2px #111;">Linked to Biller</div>
<div class="t" style="left:1551px;top:941.0px;height:20px;line-height:20px;font-size:11.2px;color:#111;-webkit-text-stroke:0.2px #111;">PDF</div>
<div class="t" style="right:201.5px;text-align:right;top:941.0px;height:20px;line-height:20px;font-size:11.2px;color:#111;-webkit-text-stroke:0.2px #111;">Amount</div>
<div class="t" style="left:1687px;top:941.0px;height:20px;line-height:20px;font-size:11.2px;color:#111;-webkit-text-stroke:0.2px #111;">Web</div>
<div class="t" style="left:1641px;width:300px;text-align:center;top:941.0px;height:20px;line-height:20px;font-size:11.2px;color:#111;-webkit-text-stroke:0.2px #111;">Action</div>
<div class="t" style="left: 439px; top: 963.5px; height: 20px; line-height: 20px; font-size: 11.2px; color: rgb(17, 17, 17); -webkit-text-stroke: 0.2px rgb(17, 17, 17); transform: scaleX(1.0478); transform-origin: 0px 0px;">You don't have any scheduled bills or deposits due for this account.</div>
<div class="b" style="left:253px;top:989px;width:60px;height:23px;background:#fff;box-sizing:border-box;border:1px solid #c6c6c6;"></div>
<div class="t" style="left:253px;top:990.5px;width:60px;height:20px;line-height:20px;font-size:11px;font-weight:700;color:#3569a0;text-align:center;"></div>
<div class="t" style="left:264px;top:989px;height:22px;line-height:22px;font-size:11.5px;font-weight:700;color:#3569a0;">Add</div>
<svg class="b" style="left:288px;top:997px" width="11" height="7"><path d="M0 0 L10.5 0 L5.25 6 Z" fill="#3569a0"></path></svg>
<div class="b" style="left:319px;top:988.5px;width:155px;height:23.0px;background:#fff;box-sizing:border-box;border:1px solid #c6c6c6;"></div>
<div class="t" style="left:319px;top:990.0px;width:155px;height:20px;line-height:20px;font-size:11px;font-weight:700;color:#3569a0;text-align:center;">Manage Bills &amp; Income</div>
<div class="t" style="left: 1035px; top: 989.5px; height: 20px; line-height: 20px; font-size: 11px; color: rgb(48, 72, 154); -webkit-text-stroke: 0.2px rgb(48, 72, 154); transform: scaleX(1.0169); transform-origin: 0px 0px;">Lowest Balance Forecast before 7/27/2018: 624,573.77</div>
<div class="b" style="left:234px;top:1046px;width:1639px;height:1px;background:#e0e0e0;"></div>
<div class="b" style="left:0px;top:1059px;width:1873px;height:9px;background:#e4e5e7;"></div>
<div class="b" style="left:0px;top:1068px;width:1873px;height:1px;background:#f2f2f2;"></div>
<div class="b" style="left:0px;top:1069px;width:1873px;height:5px;background:#050505;"></div>
<div class="b" style="left:627px;top:1069px;width:48px;height:5px;background:#7a4b25;"></div>
<div class="b" style="left:676px;top:1069px;width:48px;height:5px;background:#333538;"></div>
</body></html>
